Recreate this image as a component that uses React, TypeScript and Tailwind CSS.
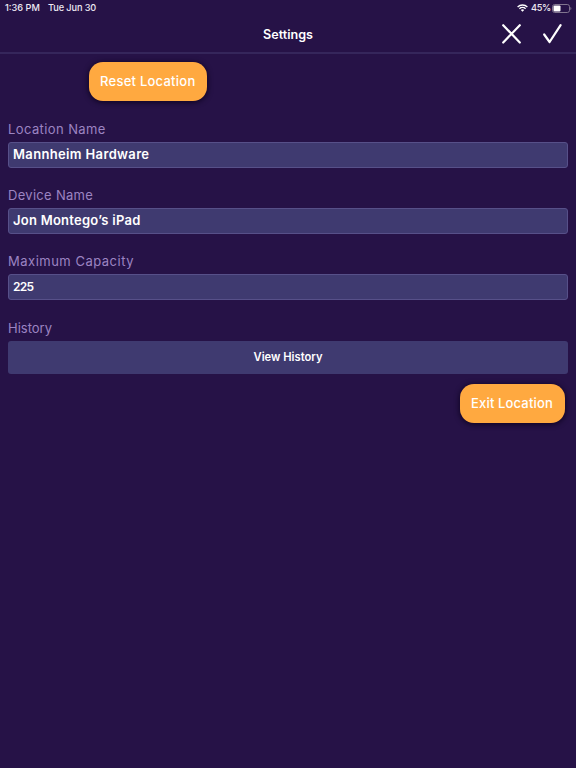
import { useState } from 'react';

interface FieldProps {
  id: string;
  label: string;
  labelClass: string;
  value: string;
  inputClass: string;
  onChange: (value: string) => void;
}

function Field({ id, label, labelClass, value, inputClass, onChange }: FieldProps) {
  return (
    <div className="mb-[18.3px]">
      <label htmlFor={id} className={`block h-[18px] mb-1 text-[13px] leading-[18px] text-[#9c84c2] whitespace-nowrap ${labelClass}`}>
        {label}
      </label>
      <input
        id={id}
        type="text"
        value={value}
        onChange={(e) => onChange(e.target.value)}
        className={`block w-full h-[26px] px-1 pb-[2px] rounded-[3px] border border-[#575089] bg-[#3f3a70] font-semibold text-white outline-none ${inputClass}`}
      />
    </div>
  );
}

function StatusBar() {
  return (
    <div className="flex h-4 items-center justify-between pl-[5px] pr-1 text-[9.2px] leading-4 font-medium text-[#eeeaf4]">
      <div className="flex gap-2">
        <span className="w-[35px] whitespace-nowrap">1:36 PM</span>
        <span className="whitespace-nowrap tracking-[-0.1px]">Tue Jun 30</span>
      </div>
      <div className="flex items-center">
        <svg width="11" height="8" viewBox="0 0 11 8" fill="none" stroke="white" strokeWidth="1.3">
          <path d="M.6 3a7 7 0 0 1 9.8 0" />
          <path d="M2.4 4.8a4.4 4.4 0 0 1 6.2 0" />
          <path d="M5.5 7.7 3.8 6a2.4 2.4 0 0 1 3.4 0z" fill="white" stroke="none" />
        </svg>
        <span className="ml-[3px] w-[19px] whitespace-nowrap tracking-[-0.3px]">45%</span>
        <svg className="ml-[2px]" width="20" height="9" viewBox="0 0 20 9">
          <rect x=".5" y=".5" width="17" height="8" rx="2.2" fill="none" stroke="#81758f" />
          <rect x="1.5" y="1.5" width="7" height="6" rx="1" fill="white" />
          <path d="M18.4 3v3c1.3-.5 1.3-2.5 0-3z" fill="#81758f" />
        </svg>
      </div>
    </div>
  );
}

export default function App() {
  const [location, setLocation] = useState('Mannheim Hardware');
  const [device, setDevice] = useState('Jon Montego’s iPad');
  const [capacity, setCapacity] = useState('225');

  return (
    <div className="min-h-screen bg-[#261247] font-['Inter','Liberation_Sans',sans-serif]">
      <header className="h-[54px] border-b-2 border-[#35265b]">
        <StatusBar />
        <div className="grid h-9 grid-cols-3 items-center">
          <h1 className="col-start-2 pt-[2px] text-center text-[12.6px] font-semibold text-white">Settings</h1>
          <div className="flex items-center justify-end gap-[21.5px] pr-[14.5px]">
            <button aria-label="Cancel">
              <svg width="19" height="20" viewBox="0 0 19 20" fill="none" stroke="white" strokeWidth="2.2" strokeLinecap="round">
                <path d="M1.2 1.2 17.8 18.5M17.8 1.2 1.2 18.5" />
              </svg>
            </button>
            <button aria-label="Save">
              <svg width="19" height="20" viewBox="0 0 19 20" fill="none" stroke="white" strokeWidth="2.2" strokeLinecap="round" strokeLinejoin="round">
                <path d="M1.2 10.5 6.6 18 17.6 1.2" />
              </svg>
            </button>
          </div>
        </div>
      </header>

      <main className="flex flex-col px-2 pt-2">
        <button className="mb-[18.7px] ml-[80.5px] h-[39px] w-[118.5px] self-start rounded-[14px] bg-[#ffa940] text-[13px] font-medium tracking-[0.25px] text-white shadow-[0_1px_5px_1px_rgba(12,2,28,0.75)]">
          Reset Location
        </button>

        <Field
          id="location"
          label="Location Name"
          labelClass="tracking-[0.4px]"
          value={location}
          inputClass="text-[13px] tracking-[0.35px]"
          onChange={setLocation}
        />
        <Field
          id="device"
          label="Device Name"
          labelClass="tracking-[0.3px]"
          value={device}
          inputClass="text-[13px] tracking-[0.25px]"
          onChange={setDevice}
        />
        <Field
          id="capacity"
          label="Maximum Capacity"
          labelClass="tracking-[0.5px]"
          value={capacity}
          inputClass="text-[12px] tracking-[-0.7px]"
          onChange={setCapacity}
        />

        <div className="mb-1 h-[18px] text-[13px] leading-[18px] text-[#9c84c2]">History</div>
        <button className="h-[33px] rounded-[3px] bg-[#3f3a70] pt-px text-[11.2px] font-semibold text-white">View History</button>

        <button className="mt-[10px] mr-[3.5px] h-[39px] w-[105px] self-end rounded-[14px] bg-[#ffa940] pt-px text-[13px] font-medium tracking-[0.15px] text-white shadow-[0_1px_5px_1px_rgba(12,2,28,0.75)]">
          Exit Location
        </button>
      </main>
    </div>
  );
}
